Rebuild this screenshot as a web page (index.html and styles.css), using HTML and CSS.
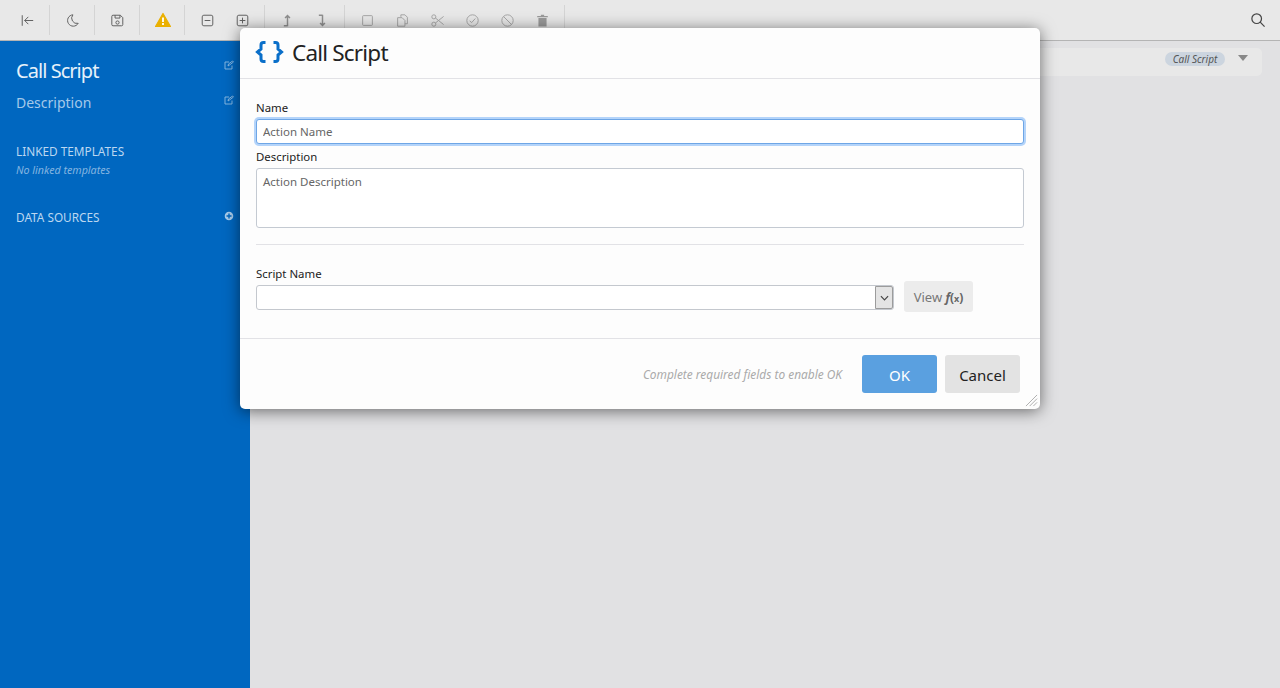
FILE: index.html
```html
<!DOCTYPE html>
<html lang="en">
<head>
    <meta charset="UTF-8">
    <title>Call Script</title>
    <link rel="stylesheet" href="styles.css">
</head>
<body>
    <div class="toolbar">
        <div class="tool-group">
            <span class="tool"><svg viewBox="0 0 16 16"><path d="M1.500 1.500v13M15 8H4.500M9 3.500L4.500 8 9 12.500"/></svg></span>
        </div>
        <div class="tool-group">
            <span class="tool"><svg viewBox="0 0 16 16"><path d="M8.500 1a7 7 0 1 0 6.500 10.500 6.500 6.500 0 0 1-6.500-10.500z"/></svg></span>
        </div>
        <div class="tool-group">
            <span class="tool"><svg viewBox="0 0 16 16"><path d="M2.500 1.500h9l3 3v8.500a1.500 1.500 0 0 1-1.500 1.500H2.500A1.500 1.500 0 0 1 1 13V3a1.500 1.500 0 0 1 1.500-1.500zM5 1.500v3.500h6V1.500"/><circle cx="8" cy="10.500" r="2"/></svg></span>
        </div>
        <div class="tool-group">
            <span class="tool warn-tool"><svg viewBox="0 0 16 16"><path class="warn" d="M8 1.500L15.500 14.500H.5z"/><path class="warn-mark" d="M8 5.500v4.500M8 11v2"/></svg></span>
        </div>
        <div class="tool-group">
            <span class="tool"><svg viewBox="0 0 16 16"><rect x="1.500" y="1.500" width="13" height="13" rx="2"/><path d="M4.500 8h7"/></svg></span>
            <span class="tool"><svg viewBox="0 0 16 16"><rect x="1.500" y="1.500" width="13" height="13" rx="2"/><path d="M4.500 8h7M8 4.500v7"/></svg></span>
        </div>
        <div class="tool-group muted">
            <span class="tool move-tool"><svg viewBox="0 0 16 16"><path d="M8 15V2M5 5l3-3 3 3M8 14.500H3.500"/></svg></span>
            <span class="tool move-tool"><svg viewBox="0 0 16 16"><path d="M8 1v13M5 11l3 3 3-3M8 1.500H3.500"/></svg></span>
        </div>
        <div class="tool-group muted">
            <span class="tool"><svg viewBox="0 0 16 16"><rect x="2" y="2" width="12" height="12" rx="1"/></svg></span>
            <span class="tool"><svg viewBox="0 0 16 16"><path d="M6 3.500V1h5l3 3v8h-3M2 4.500h5.500L11 8v7H2z"/></svg></span>
            <span class="tool"><svg viewBox="0 0 16 16"><circle cx="3.500" cy="3.500" r="2.500"/><circle cx="3.500" cy="12.500" r="2.500"/><path d="M5.500 5l10 8M5.500 11l10-8"/></svg></span>
            <span class="tool"><svg viewBox="0 0 16 16"><circle cx="8" cy="8" r="7"/><path d="M4.500 8.500l2.500 2 4.500-5"/></svg></span>
            <span class="tool"><svg viewBox="0 0 16 16"><circle cx="8" cy="8" r="7"/><path d="M3 3l10 10"/></svg></span>
            <span class="tool"><svg viewBox="0 0 16 16"><path class="solid" d="M3 5h10v10.500H3zM1.500 2.500h13V4h-13zM6 1h4v1.500H6z"/></svg></span>
        </div>
        <span class="tool search"><svg viewBox="0 0 16 16"><circle cx="6.500" cy="6.500" r="5.500"/><path d="M10.500 10.500L15.500 15.500"/></svg></span>
    </div>

    <div class="workspace">
        <aside class="sidebar">
            <div class="side-row side-title">
                <span>Call Script</span>
                <svg class="edit-icon" viewBox="0 0 10 10"><path d="M8 5.500V9H1V2h4M4 6l.5-2L8.500 1l1 1-4 3z"/></svg>
            </div>
            <div class="side-row side-desc">
                <span>Description</span>
                <svg class="edit-icon" viewBox="0 0 10 10"><path d="M8 5.500V9H1V2h4M4 6l.5-2L8.500 1l1 1-4 3z"/></svg>
            </div>
            <div class="side-head linked">LINKED TEMPLATES</div>
            <div class="side-note">No linked templates</div>
            <div class="side-row side-head sources">
                <span>DATA SOURCES</span>
                <svg class="add-icon" viewBox="0 0 10 10"><circle cx="5" cy="5" r="5"/><path d="M5 2.500v5M2.500 5h5"/></svg>
            </div>
        </aside>
        <main class="canvas">
            <div class="action-card">
                <span class="pill">Call Script</span>
                <span class="caret"></span>
            </div>
        </main>
    </div>

    <div class="modal">
        <div class="modal-head">
            <svg class="brace-icon" viewBox="0 0 28 22"><path d="M10 1.500H8Q5.500 1.500 5.500 4V8L2 11 5.500 14V18Q5.500 20.500 8 20.500H10M18 1.500H20Q22.500 1.500 22.500 4V8L26 11 22.500 14V18Q22.500 20.500 20 20.500H18"/></svg>
            <h1>Call Script</h1>
        </div>
        <div class="modal-body">
            <label class="field-label">Name</label>
            <input class="text-input focused" type="text" placeholder="Action Name">
            <label class="field-label desc-label">Description</label>
            <textarea class="text-input text-area" placeholder="Action Description"></textarea>
            <hr class="divider">
            <label class="field-label">Script Name</label>
            <div class="script-row">
                <div class="combo">
                    <span class="combo-btn"><svg viewBox="0 0 10 6"><path d="M1 1l4 4 4-4"/></svg></span>
                </div>
                <button class="view-btn">View <span class="fx"><i>f</i>(<small>x</small>)</span></button>
            </div>
        </div>
        <div class="modal-foot">
            <span class="hint">Complete required fields to enable OK</span>
            <button class="btn btn-ok">OK</button>
            <button class="btn btn-cancel">Cancel</button>
        </div>
        <svg class="grip" viewBox="0 0 14 14"><path d="M13 1L1 13M13 5L5 13M13 9L9 13"/></svg>
    </div>
</body>
</html>
```

FILE: styles.css
```css
html,
body {
    margin: 0;
    height: 100%;
    overflow: hidden;
    font-family: "Noto Sans", "Open Sans", sans-serif;
    background-color: #e1e1e3;
}

.toolbar {
    display: flex;
    align-items: center;
    height: 40px;
    padding-left: 5px;
    background-color: #e8e8e8;
    border-bottom: 1px solid #b4b4b4;
}

.tool-group {
    display: flex;
    height: 30px;
    padding: 0 4px 0 5px;
    border-right: 1px solid #d4d4d4;
}

.tool {
    display: flex;
    align-items: center;
    justify-content: center;
    width: 35px;
}

.tool svg {
    width: 13px;
    height: 13px;
    fill: none;
    stroke: #5f5f5f;
    stroke-width: 1.200;
}

.muted svg {
    stroke: #a5a5a5;
}

.move-tool svg {
    stroke: #8f8f8f;
    stroke-width: 1.800;
}

.tool.warn-tool svg {
    width: 16px;
    height: 16px;
}

.tool .warn {
    fill: #eab000;
    stroke: #eab000;
    stroke-linejoin: round;
}

.tool .warn-mark {
    stroke: #fff;
    stroke-width: 1.800;
}

.tool .solid {
    fill: #9a9a9a;
    stroke: none;
}

.search {
    margin-left: auto;
    margin-right: 5px;
}

.tool.search svg {
    width: 14px;
    height: 14px;
    stroke: #444;
    stroke-width: 1.400;
}

.workspace {
    display: flex;
    height: 647px;
}

.sidebar {
    width: 250px;
    padding: 16px 16px 0;
    box-sizing: border-box;
    background-color: #0067c0;
    color: #c4dcf2;
}

.side-row {
    display: flex;
    justify-content: space-between;
    align-items: center;
}

.side-title {
    font-size: 20px;
    line-height: 28px;
    letter-spacing: -0.95px;
    color: #e6f1fa;
    height: 28px;
}

.side-desc {
    margin-top: 7px;
    font-size: 14px;
    line-height: 22px;
    color: #a4c9ea;
}

.edit-icon {
    width: 10px;
    height: 10px;
    margin-bottom: 12px;
    fill: none;
    stroke: #8fbce3;
    stroke-width: 0.900;
}

.side-desc .edit-icon {
    margin-bottom: 6px;
}

.side-head {
    font-size: 11.800px;
    line-height: 16px;
    color: #bcd7f0;
}

.linked {
    margin-top: 29px;
}

.side-note {
    margin-top: 4px;
    font-size: 10.700px;
    line-height: 14px;
    font-style: italic;
    color: #84b5e0;
}

.sources {
    margin-top: 32px;
}

.add-icon {
    width: 10px;
    height: 10px;
    margin-bottom: 3px;
    fill: #a8cbea;
    stroke: #0067c0;
    stroke-width: 1.400;
}

.canvas {
    flex: 1;
    padding: 7px 18px 0 12px;
}

.action-card {
    display: flex;
    justify-content: flex-end;
    align-items: flex-start;
    height: 28px;
    padding-top: 4px;
    box-sizing: border-box;
    background-color: #e8e8e8;
    border-radius: 5px;
}

.pill {
    width: 60px;
    height: 14px;
    margin-right: 13px;
    font-size: 10px;
    line-height: 15px;
    font-style: italic;
    text-align: center;
    color: #555;
    background-color: #ccd5df;
    border-radius: 7px;
}

.caret {
    width: 0;
    height: 0;
    margin: 3px 14px 0 0;
    border-left: 5px solid transparent;
    border-right: 5px solid transparent;
    border-top: 6px solid #888;
}

.modal {
    position: absolute;
    left: 240px;
    top: 28px;
    width: 800px;
    height: 381px;
    background-color: #fdfdfd;
    border-radius: 5px;
    box-shadow: 0 2px 16px rgba(0, 0, 0, 0.55);
}

.modal-head {
    display: flex;
    align-items: center;
    height: 51px;
    padding: 0 0 2px 15px;
    box-sizing: border-box;
    border-bottom: 1px solid #e2e2e6;
}

.modal-head h1 {
    margin: 0 0 0 8px;
    font-size: 22.500px;
    font-weight: 400;
    letter-spacing: -0.8px;
    color: #222;
}

.brace-icon {
    width: 29px;
    height: 22px;
    fill: none;
    stroke: #0a6fc9;
    stroke-width: 3;
}

.modal-body {
    height: 260px;
    padding: 21px 16px 0;
    box-sizing: border-box;
    border-bottom: 1px solid #e2e2e6;
}

.field-label {
    display: block;
    font-size: 11.400px;
    line-height: 16px;
    color: #222;
}

.desc-label {
    margin-top: 5px;
}

.text-input {
    display: block;
    width: 100%;
    box-sizing: border-box;
    height: 25px;
    margin: 3px 0 0;
    padding: 0 6px;
    font-family: inherit;
    font-size: 11.500px;
    border: 1px solid #c4cad2;
    border-radius: 3px;
    outline: none;
    background-color: #fff;
    resize: none;
}

.text-input::placeholder {
    color: #666;
    opacity: 1;
}

.focused {
    border-color: #6ea6e6;
    box-shadow: 0 0 0 2px #b4d4fa;
}

.text-area {
    height: 60px;
    padding-top: 5px;
}

.divider {
    height: 0;
    margin: 16px 0 21px;
    border: 0;
    border-top: 1px solid #e2e2e6;
}

.script-row {
    display: flex;
    align-items: center;
    margin-top: -1px;
}

.combo {
    display: flex;
    justify-content: flex-end;
    width: 638px;
    height: 25px;
    box-sizing: border-box;
    border: 1px solid #c4c8ce;
    border-radius: 3px;
    background-color: #fff;
}

.combo-btn {
    display: flex;
    align-items: center;
    justify-content: center;
    width: 16px;
    border: 1px solid #9c9c9c;
    background-color: #e4e4e4;
    border-radius: 0 2px 2px 0;
}

.combo-btn svg {
    width: 9px;
    height: 6px;
    fill: none;
    stroke: #444;
    stroke-width: 1.300;
}

.view-btn {
    width: 69px;
    height: 31px;
    margin: 0 0 2px 10px;
    padding: 0;
    font-family: inherit;
    font-size: 13px;
    color: #777;
    background-color: #ececec;
    border: 0;
    border-radius: 3px;
}

.fx {
    font-weight: 700;
    font-size: 12px;
    color: #666;
}

.fx small {
    font-size: 9px;
}

.modal-foot {
    display: flex;
    justify-content: flex-end;
    align-items: center;
    height: 70px;
    padding-right: 20px;
    box-sizing: border-box;
}

.hint {
    margin-right: 20px;
    font-size: 11.900px;
    font-style: italic;
    color: #aaa;
}

.btn {
    height: 38px;
    padding: 2px 0 0;
    font-family: inherit;
    font-size: 15px;
    border: 0;
    border-radius: 3px;
}

.btn-ok {
    width: 75px;
    color: #fff;
    background-color: #5aa0e0;
}

.btn-cancel {
    width: 75px;
    margin-left: 8px;
    color: #222;
    background-color: #e3e3e3;
}

.grip {
    position: absolute;
    right: 2px;
    bottom: 2px;
    width: 13px;
    height: 13px;
    fill: none;
    stroke: #aaa;
    stroke-width: 1;
}
```
